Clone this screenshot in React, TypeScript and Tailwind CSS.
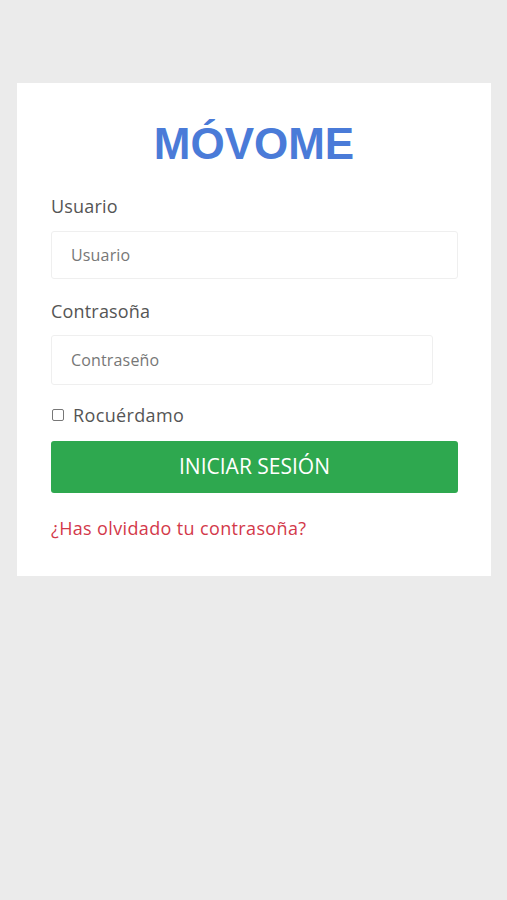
export default function App() {
  return (
    <div className="min-h-[900px] w-full bg-[#ebebeb] pt-[83px] font-['Open_Sans',sans-serif]">
      <div className="mx-[17px] w-[474px] bg-white px-[34px] pb-[35px] pt-[36px]">
        <h1 className="text-center font-['Liberation_Sans',sans-serif] text-[44px] font-bold leading-[50px] text-[#4a7bd8]">
          MÓVOME
        </h1>

        <form className="mt-[24px]" onSubmit={(e) => e.preventDefault()}>
          <label className="block text-[18px] leading-[26px] tracking-[0.01em] text-[#555]">Usuario</label>
          <input
            type="text"
            placeholder="Usuario"
            className="mt-[12px] block h-[48px] w-[407px] rounded-[3px] border border-[#efefef] px-[19px] text-[16px] tracking-[0.01em] text-[#555] placeholder:text-[#777] outline-none"
          />

          <label className="mt-[19px] block text-[18px] leading-[26px] tracking-[0.01em] text-[#555]">Contrasoña</label>
          <input
            type="password"
            placeholder="Contraseño"
            className="mt-[11px] block h-[50px] w-[382px] rounded-[3px] border border-[#efefef] px-[19px] text-[16px] tracking-[0.01em] text-[#555] placeholder:text-[#777] outline-none"
          />

          <label className="mt-[19px] flex items-center gap-[9px] text-[18px] leading-[22px] tracking-[0.02em] text-[#555]">
            <span className="ml-[1px] h-[12px] w-[12px] rounded-[2px] border border-[#777]" />
            Rocuérdamo
          </label>

          <button
            type="submit"
            className="mt-[15px] block h-[52px] w-[407px] rounded-[3px] bg-[#2ea84f] text-[21px] font-medium text-white"
          >
            INICIAR SESIÓN
          </button>

          <a href="#" className="mt-[22px] block text-[18px] leading-[26px] tracking-[0.02em] text-[#d3394a]">
            ¿Has olvidado tu contrasoña?
          </a>
        </form>
      </div>
    </div>
  );
}
